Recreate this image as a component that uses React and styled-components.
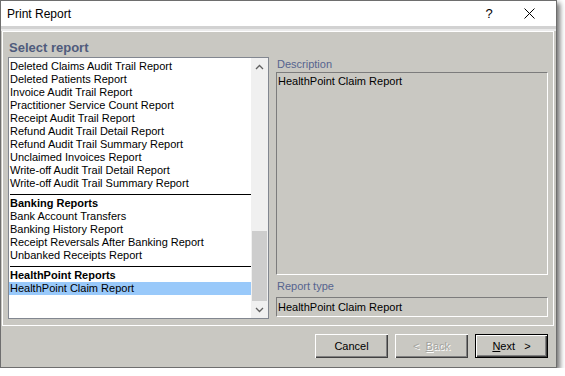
import React from "react";
import styled, { createGlobalStyle } from "styled-components";

const Global = createGlobalStyle`
  html, body { margin: 0; padding: 0; background: #ffffff; }
  body { font-family: "Liberation Sans", Arial, sans-serif; }
  * { box-sizing: border-box; }
`;

const Window = styled.div`
  width: 557px;
  height: 368px;
  border: 1px solid #6e6e6e;
  display: flex;
  flex-direction: column;
  background: #c9c8c2;
  box-shadow: 3px 3px 5px rgba(0, 0, 0, 0.55);
  font-family: "Liberation Sans", Arial, sans-serif;
`;

const TitleBar = styled.div`
  height: 25px;
  flex: none;
  background: #ffffff;
  display: flex;
  align-items: center;
  padding-left: 6px;
  font-size: 12px;
  color: #000;
`;

const TitleText = styled.span`
  flex: 1;
`;

const TitleButton = styled.div`
  width: 40px;
  height: 25px;
  display: flex;
  align-items: center;
  justify-content: center;
  font-size: 13px;
  color: #000;
`;

const TitleButtons = styled.div`
  display: flex;
  padding-right: 7px;
`;

const Band = styled.div`
  height: 5px;
  flex: none;
  background: linear-gradient(#d2d2d2 0 3px, #ebebeb 3px);
`;

const Panel = styled.div`
  margin: 0 2px 0 1px;
  border: 1px solid #ffffff;
  padding: 6px 5px 6px 5px;
  display: flex;
  flex-direction: column;
`;

const PanelHeader = styled.div`
  height: 19px;
  line-height: 19px;
  font-size: 13px;
  font-weight: bold;
  color: #4f5b7c;
  padding-left: 1px;
`;

const Content = styled.div`
  display: flex;
  gap: 7px;
  height: 262px;
`;

const ListBox = styled.div`
  width: 261px;
  height: 262px;
  border: 1px solid #828790;
  background: #ffffff;
  display: flex;
`;

const Items = styled.div`
  flex: 1;
  padding-top: 2px;
  overflow: hidden;
`;

const Row = styled.div`
  height: 13px;
  line-height: 13px;
  font-size: 11px;
  padding-left: 1px;
  white-space: nowrap;
  color: #000;
  font-weight: ${(p) => (p.$header ? "bold" : "normal")};
  background: ${(p) => (p.$selected ? "#99c9fa" : "transparent")};
`;

const Separator = styled.div`
  height: 1px;
  background: #000;
  margin: 4px 0 2px 1px;
`;

const ScrollBar = styled.div`
  width: 17px;
  background: #f0f0f0;
  display: flex;
  flex-direction: column;
`;

const ScrollArrow = styled.div`
  height: 17px;
  flex: none;
  display: flex;
  align-items: center;
  justify-content: center;
`;

const Track = styled.div`
  flex: 1;
  display: flex;
  flex-direction: column;
  justify-content: flex-end;
`;

const Thumb = styled.div`
  height: 70px;
  margin: 0 1px;
  background: #cdcdcd;
`;

const RightCol = styled.div`
  flex: 1;
  display: flex;
  flex-direction: column;
  padding-bottom: 2px;
`;

const Label = styled.div`
  height: ${(p) => p.$h}px;
  line-height: 14px;
  font-size: 11px;
  color: #56648f;
  padding-left: 1px;
  margin-top: ${(p) => p.$mt || 0}px;
`;

const SunkenBox = styled.div`
  border: 1px solid;
  border-color: #7c7c7c #ffffff #ffffff #7c7c7c;
  font-size: 11px;
  line-height: 13px;
  color: #000;
  padding: 2px 1px;
`;

const DescBox = styled(SunkenBox)`
  flex: 1;
`;

const TypeBox = styled(SunkenBox)`
  height: 20px;
  margin-top: 4px;
  display: flex;
  align-items: center;
  padding: 0 1px;
`;

const ButtonBar = styled.div`
  display: flex;
  justify-content: flex-end;
  gap: 7px;
  padding: 8px 8px 9px 0;
`;

const Button = styled.div`
  width: 73px;
  height: 24px;
  display: flex;
  align-items: center;
  justify-content: center;
  font-size: 11px;
  background: #c9c8c2;
  color: ${(p) => (p.$disabled ? "#a3a39e" : "#000")};
  text-shadow: ${(p) => (p.$disabled ? "1px 1px 0 #ffffff" : "none")};
  border: ${(p) => (p.$default ? "1px solid #000" : "none")};
  box-shadow: inset 1px 1px 0 #ffffff, inset -1px -1px 0 #404040,
    inset -2px -2px 0 #808080;
  white-space: pre;
`;

const U = styled.span`
  text-decoration: underline;
`;

const Chevron = ({ up }) => (
  <svg width="9" height="6" viewBox="0 0 9 6">
    <path
      d={up ? "M1 5 L4.5 1.5 L8 5" : "M1 1 L4.5 4.5 L8 1"}
      fill="none"
      stroke="#606060"
      strokeWidth="1.3"
    />
  </svg>
);

const groups = [
  {
    header: null,
    items: [
      "Deleted Claims Audit Trail Report",
      "Deleted Patients Report",
      "Invoice Audit Trail Report",
      "Practitioner Service Count Report",
      "Receipt Audit Trail Report",
      "Refund Audit Trail Detail Report",
      "Refund Audit Trail Summary Report",
      "Unclaimed Invoices Report",
      "Write-off Audit Trail Detail Report",
      "Write-off Audit Trail Summary Report",
    ],
  },
  {
    header: "Banking Reports",
    items: [
      "Bank Account Transfers",
      "Banking History Report",
      "Receipt Reversals After Banking Report",
      "Unbanked Receipts Report",
    ],
  },
  {
    header: "HealthPoint Reports",
    items: ["HealthPoint Claim Report"],
  },
];

export default function App() {
  return (
    <>
      <Global />
      <Window>
        <TitleBar>
          <TitleText>Print Report</TitleText>
          <TitleButtons>
            <TitleButton>?</TitleButton>
            <TitleButton>
              <svg width="11" height="11" viewBox="0 0 11 11">
                <path d="M0.5 0.5 L10.5 10.5 M10.5 0.5 L0.5 10.5" stroke="#000" strokeWidth="1" />
              </svg>
            </TitleButton>
          </TitleButtons>
        </TitleBar>
        <Band />
        <Panel>
          <PanelHeader>Select report</PanelHeader>
          <Content>
            <ListBox>
              <Items>
                {groups.map((g, gi) => (
                  <React.Fragment key={gi}>
                    {g.header && (
                      <>
                        <Separator />
                        <Row $header>{g.header}</Row>
                      </>
                    )}
                    {g.items.map((it) => (
                      <Row key={it} $selected={it === "HealthPoint Claim Report"}>
                        {it}
                      </Row>
                    ))}
                  </React.Fragment>
                ))}
              </Items>
              <ScrollBar>
                <ScrollArrow>
                  <Chevron up />
                </ScrollArrow>
                <Track>
                  <Thumb />
                </Track>
                <ScrollArrow>
                  <Chevron />
                </ScrollArrow>
              </ScrollBar>
            </ListBox>
            <RightCol>
              <Label $h={15}>Description</Label>
              <DescBox>HealthPoint Claim Report</DescBox>
              <Label $h={14} $mt={4}>Report type</Label>
              <TypeBox>HealthPoint Claim Report</TypeBox>
            </RightCol>
          </Content>
        </Panel>
        <ButtonBar>
          <Button>Cancel</Button>
          <Button $disabled>
            {"<  "}
            <U>B</U>ack
          </Button>
          <Button $default>
            <U>N</U>
            {"ext   >"}
          </Button>
        </ButtonBar>
      </Window>
    </>
  );
}
